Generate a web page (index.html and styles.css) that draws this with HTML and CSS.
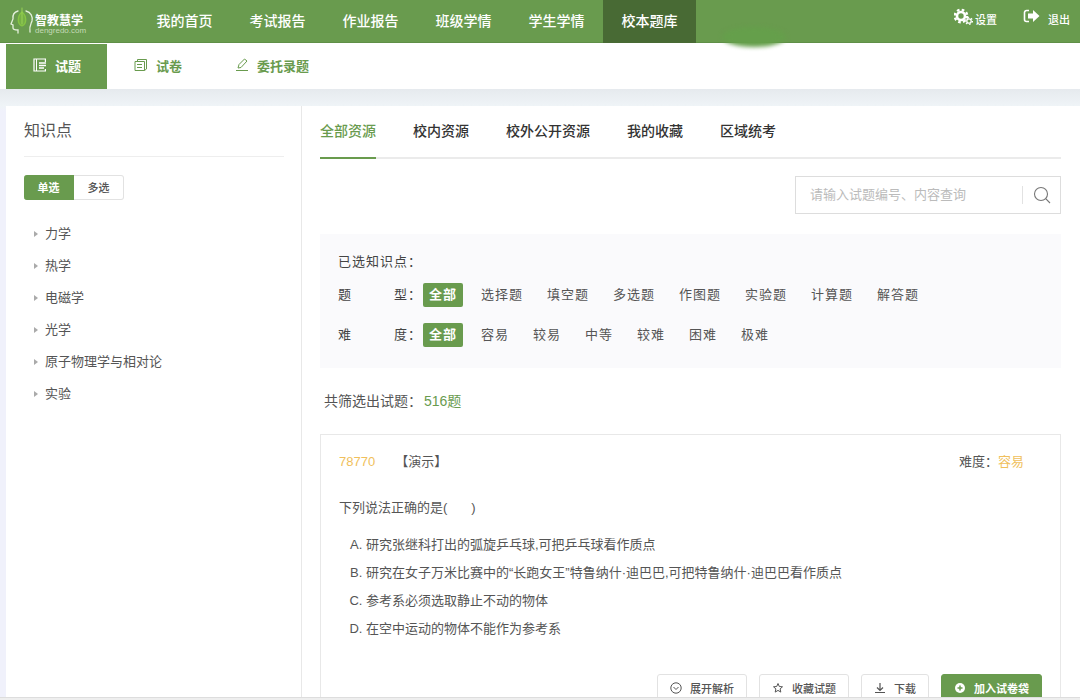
FILE: index.html
```html
<!DOCTYPE html>
<html lang="zh-CN">
<head>
  <meta charset="UTF-8">
  <meta name="viewport" content="width=device-width, initial-scale=1.0">
  <title>智教慧学 - 校本题库</title>
  <link rel="stylesheet" href="styles.css">
</head>
<body>
  <header class="header">
    <a class="logo" href="#">
      <svg width="24" height="28" viewBox="0 0 24 28" fill="none" stroke="#e4f0dc" stroke-width="1.3" stroke-linecap="round">
        <path d="M8 4C4 5 2.500 8 3 12L1 17l2 1v3c0 2 2 2 5 2v3M16 4c5 1 7 6 6 10-1 3-3 5-2 11"/>
        <path d="M12 19C7 17 7 9 12 5c5 4 5 12 0 14z" stroke="#86c544" fill="#76b046"/>
        <path d="M12 1v16" stroke="#98d254" stroke-width="1"/>
      </svg>
      <span class="logo-text">
        <span class="logo-name">智教慧学</span>
        <span class="logo-site">dengredo.com</span>
      </span>
    </a>
    <nav class="nav">
      <a href="#">我的首页</a>
      <a href="#">考试报告</a>
      <a href="#">作业报告</a>
      <a href="#">班级学情</a>
      <a href="#">学生学情</a>
      <a href="#" class="active">校本题库</a>
      <span class="glow"></span>
    </nav>
    <div class="user-links">
      <a href="#">
        <svg width="19" height="18" viewBox="0 0 19 18" fill="none" stroke="#fff">
          <circle cx="7" cy="8" r="4" stroke-width="2.600"/>
          <circle cx="7" cy="8" r="6.200" stroke-width="2.400" stroke-dasharray="2.600 2.270"/>
          <circle cx="15" cy="13" r="2.200" stroke-width="1.300"/>
          <circle cx="15" cy="13" r="3.400" stroke-width="1.300" stroke-dasharray="1.500 2.060"/>
        </svg>
        <span>设置</span>
      </a>
      <a href="#" class="logout">
        <svg width="17" height="16" viewBox="0 0 17 16">
          <path d="M6 2.500H3.500a2 2 0 0 0-2 2v7a2 2 0 0 0 2 2H6" fill="none" stroke="#fff" stroke-width="1.600"/>
          <path d="M5 5.500h5V2l6.500 6L10 14v-3.500H5z" fill="#fff"/>
        </svg>
        <span>退出</span>
      </a>
    </div>
  </header>

  <nav class="subnav">
    <a href="#" class="active">
      <svg width="14" height="14" viewBox="0 0 14 14" fill="none" stroke="currentColor" stroke-width="1.200">
        <path d="M12.400 4V1H1v12h11.400v-2"/>
        <path d="M3.500 1v12" stroke-width="1"/>
        <path d="M6 5h7M6 7.500h7M6 10h5" stroke-width="1.500"/>
      </svg>
      试题
    </a>
    <a href="#">
      <svg width="14" height="14" viewBox="0 0 14 14" fill="none" stroke="currentColor">
        <path d="M3.500 3V1.500h9v9.500l-2 1.500M1 3.500h9.500v9H1zM3 6.500h5M3 9.500h5"/>
      </svg>
      试卷
    </a>
    <a href="#">
      <svg width="14" height="14" viewBox="0 0 14 14" fill="none" stroke="currentColor">
        <path d="M3 10l1-3.500L9.500 1l2.500 2-6 6.500zM1 12.500h12"/>
      </svg>
      委托录题
    </a>
  </nav>

  <div class="page">
    <aside class="sidebar">
      <h2>知识点</h2>
      <div class="toggle">
        <button type="button" class="active">单选</button>
        <button type="button">多选</button>
      </div>
      <ul class="tree">
        <li>力学</li>
        <li>热学</li>
        <li>电磁学</li>
        <li>光学</li>
        <li>原子物理学与相对论</li>
        <li>实验</li>
      </ul>
    </aside>

    <main class="content">
      <nav class="tabs">
        <a href="#" class="active">全部资源</a>
        <a href="#">校内资源</a>
        <a href="#">校外公开资源</a>
        <a href="#">我的收藏</a>
        <a href="#">区域统考</a>
      </nav>

      <form class="search">
        <input type="text" placeholder="请输入试题编号、内容查询" aria-label="请输入试题编号、内容查询">
        <button type="button" aria-label="查询">
          <svg width="18" height="18" viewBox="0 0 18 18" fill="none" stroke="#777" stroke-width="1.100">
            <circle cx="8" cy="8" r="6.500"/>
            <path d="M12.700 12.700L17 17"/>
          </svg>
        </button>
      </form>

      <section class="filter">
        <div class="filter-row first">
          <span class="filter-label">已选知识点：</span>
        </div>
        <div class="filter-row">
          <span class="filter-label"><span>题</span><span>型：</span></span>
          <a href="#" class="active">全部</a>
          <a href="#">选择题</a>
          <a href="#">填空题</a>
          <a href="#">多选题</a>
          <a href="#">作图题</a>
          <a href="#">实验题</a>
          <a href="#">计算题</a>
          <a href="#">解答题</a>
        </div>
        <div class="filter-row">
          <span class="filter-label"><span>难</span><span>度：</span></span>
          <a href="#" class="active">全部</a>
          <a href="#">容易</a>
          <a href="#">较易</a>
          <a href="#">中等</a>
          <a href="#">较难</a>
          <a href="#">困难</a>
          <a href="#">极难</a>
        </div>
      </section>

      <p class="total">共筛选出试题：<span>516题</span></p>

      <article class="question">
        <div class="question-head">
          <span class="orange">78770</span>
          <span class="source">【演示】</span>
          <span class="level">难度：<span class="orange">容易</span></span>
        </div>
        <p class="stem">下列说法正确的是(<span class="blank"></span>)</p>
        <ol class="options">
          <li>研究张继科打出的弧旋乒乓球,可把乒乓球看作质点</li>
          <li>研究在女子万米比赛中的“长跑女王”特鲁纳什·迪巴巴,可把特鲁纳什·迪巴巴看作质点</li>
          <li>参考系必须选取静止不动的物体</li>
          <li>在空中运动的物体不能作为参考系</li>
        </ol>
        <div class="actions">
          <button type="button">
            <svg width="12" height="12" viewBox="0 0 12 12" fill="none" stroke="currentColor"><circle cx="6" cy="6" r="5.200"/><path d="M3.500 5L6 7.500 8.500 5"/></svg>
            展开解析
          </button>
          <button type="button">
            <svg width="12" height="12" viewBox="0 0 12 12" fill="none" stroke="currentColor"><path d="M6 1.500l1.300 3 3.200.3-2.400 2.100.7 3.200L6 8.400l-2.800 1.700.7-3.200-2.400-2.100 3.200-.3z"/></svg>
            收藏试题
          </button>
          <button type="button">
            <svg width="12" height="12" viewBox="0 0 12 12" fill="none" stroke="currentColor" stroke-width="1.200"><path d="M6 1v7M3 5.500l3 3 3-3M1 10.500h10"/></svg>
            下载
          </button>
          <button type="button" class="primary">
            <svg width="12" height="12" viewBox="0 0 12 12"><circle cx="6" cy="6" r="5" fill="#fff"/><path d="M6 3.500v5M3.500 6h5" stroke="#699b4e" stroke-width="1.500"/></svg>
            加入试卷袋
          </button>
        </div>
      </article>
    </main>
  </div>
  <footer class="bottom-bar"></footer>
</body>
</html>
```

FILE: styles.css
```css
* { box-sizing: border-box; }

body {
  margin: 0;
  height: 100vh;
  display: flex;
  flex-direction: column;
  overflow: hidden;
  background: #f0f1fb;
  color: #555;
  font-family: "Liberation Sans", "Noto Sans CJK SC", sans-serif;
  font-size: 13px;
}

a { color: inherit; text-decoration: none; }
button, input { font-family: inherit; }
svg { flex: none; }

/* header */
.header {
  flex: none;
  display: flex;
  height: 43px;
  background: #699b4e;
  color: #fff;
  border-bottom: 1px solid #5f8f47;
}
.logo {
  display: flex;
  align-items: center;
  gap: 1px;
  width: 138px;
  padding-left: 10px;
}
.logo-text {
  display: flex;
  flex-direction: column;
  padding-top: 8px;
}
.logo-name {
  font-size: 12px;
  font-weight: bold;
  line-height: 12px;
}
.logo-site {
  font-size: 8px;
  line-height: 8px;
  color: #c4dab6;
}
.nav {
  position: relative;
  display: flex;
}
.nav a {
  width: 93px;
  line-height: 42px;
  font-size: 14px;
  font-weight: 500;
  text-align: center;
}
.nav a.active {
  height: 43px;
  background: #486a34;
}
.glow {
  position: absolute;
  left: 100%;
  bottom: -5px;
  width: 64px;
  height: 20px;
  margin-left: 26px;
  border-radius: 50%;
  background: #659f4b;
  filter: blur(2px);
}
.user-links {
  display: flex;
  gap: 26px;
  margin-left: auto;
  padding: 8px 10px 0 0;
  font-size: 11px;
  font-weight: 500;
}
.user-links a {
  display: flex;
  gap: 2px;
}
.user-links a.logout { gap: 8px; }
.user-links span { line-height: 24px; }

/* sub navigation */
.subnav {
  flex: none;
  display: flex;
  height: 46px;
  padding: 1px 6px 0;
  background: #fff;
  color: #699b4e;
  font-weight: bold;
}
.subnav a {
  display: flex;
  align-items: center;
  gap: 8px;
  padding: 0 26px 3px 27px;
}
.subnav a.active {
  background: #699b4e;
  color: #fff;
}

/* page body */
.page {
  flex: 1;
  min-height: 0;
  display: flex;
  padding: 17px 0 0 6px;
  overflow: hidden;
  background: linear-gradient(#e6eaee, #eff4f7 17px, #f0f1fb 22px);
}
.sidebar {
  flex: none;
  width: 296px;
  padding: 0 17px 0 18px;
  background: #fff;
  border-right: 1px solid #e8e8e8;
}
.sidebar h2 {
  margin: 0 0 18px;
  font-size: 16px;
  font-weight: normal;
  line-height: 50px;
  border-bottom: 1px solid #eee;
}
.toggle {
  display: flex;
}
.toggle button {
  width: 50px;
  height: 25px;
  padding: 0 0 2px;
  border: 1px solid #e2e2e2;
  border-left: 0;
  border-radius: 0 3px 3px 0;
  background: #fff;
  color: #555;
  font-size: 11px;
  font-weight: 500;
}
.toggle button.active {
  border-color: #699b4e;
  border-radius: 3px 0 0 3px;
  background: #699b4e;
  color: #fff;
  font-weight: bold;
}
.tree {
  margin: 18px 0 0;
  padding: 0 0 0 10px;
  list-style: none;
}
.tree li {
  display: flex;
  align-items: center;
  gap: 7px;
  line-height: 32px;
}
.tree li::before {
  content: "";
  border: 3px solid transparent;
  border-left: 4px solid #aaa;
  border-right: 0;
}

.content {
  flex: 1;
  min-width: 0;
  padding: 0 19px 0 18px;
  background: #fff;
}
.tabs {
  display: flex;
  gap: 37px;
  border-bottom: 2px solid #ebebeb;
  color: #333;
  font-size: 14px;
  font-weight: 500;
  line-height: 51px;
}
.tabs a {
  margin-bottom: -2px;
  border-bottom: 2px solid transparent;
}
.tabs a.active {
  color: #699b4e;
  border-color: #699b4e;
}
.search {
  display: flex;
  align-items: center;
  width: 266px;
  height: 38px;
  margin: 17px 0 20px auto;
  border: 1px solid #ddd;
}
.search input {
  flex: 1;
  min-width: 0;
  padding: 0 14px 2px;
  border: 0;
  outline: 0;
  background: none;
  font-size: 13px;
}
.search input::placeholder { color: #bbb; }
.search button {
  display: flex;
  justify-content: center;
  width: 38px;
  padding: 0;
  border: 0;
  border-left: 1px solid #e2e2e2;
  background: none;
}

/* filters */
.filter {
  padding: 15px 18px 13px;
  background: #fafafc;
  letter-spacing: 1px;
}
.filter-row {
  display: flex;
  align-items: center;
  gap: 6px;
  height: 40px;
}
.filter-row.first { height: 26px; }
.filter-label {
  display: flex;
  justify-content: space-between;
  width: 84px;
  color: #444;
  line-height: 24px;
}
.filter-row a {
  padding: 0 9px;
  line-height: 24px;
}
.filter-row a.active {
  margin: 0 3px 0 -5px;
  padding: 0 6px;
  border-radius: 2px;
  background: #699b4e;
  color: #fff;
  font-weight: bold;
}
.total {
  margin: 21px 4px;
  font-size: 14px;
  line-height: 24px;
}
.total span {
  margin-left: 2px;
  color: #699b4e;
}

/* question card */
.question {
  padding: 15px 18px;
  border: 1px solid #e8e8e8;
}
.question-head {
  display: flex;
  line-height: 24px;
}
.orange { color: #f0bf5c; }
.source { margin-left: 20px; }
.level { margin-left: auto; padding-right: 18px; }
.stem {
  margin: 21px 0 10px;
  line-height: 26px;
}
.blank {
  display: inline-block;
  width: 24px;
}
.options {
  margin: 0;
  padding-left: 27px;
  list-style: upper-alpha;
  line-height: 28px;
}
.actions {
  display: flex;
  justify-content: flex-end;
  gap: 12px;
  margin-top: 31px;
}
.actions button {
  display: flex;
  align-items: center;
  gap: 8px;
  height: 30px;
  padding: 0 12px 2px;
  border: 1px solid #e2e2e2;
  border-radius: 3px;
  background: #fff;
  color: #555;
  font-size: 11px;
  font-weight: 500;
}
.actions button.primary {
  border-color: #699b4e;
  background: #699b4e;
  color: #fff;
  font-weight: bold;
}
.bottom-bar {
  flex: none;
  height: 3px;
  border-top: 1px solid #ddd;
  background: #eee;
}
```
